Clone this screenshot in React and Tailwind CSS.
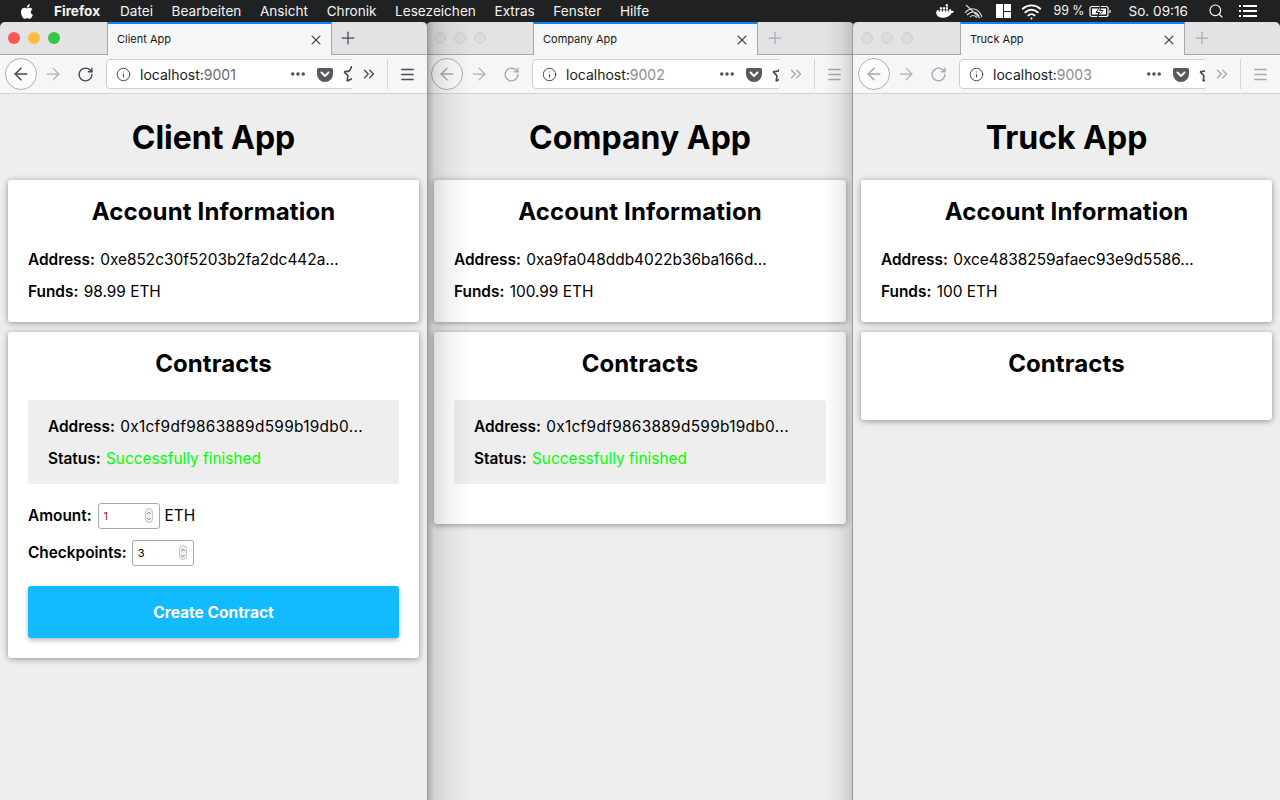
import React from "react";
import { X, Plus, ArrowLeft, ArrowRight, RotateCw, Info, Ellipsis, Star, ChevronsRight, Menu, Search, Wifi, ChevronUp, ChevronDown } from "lucide-react";

const FONT = { sans: "font-['Inter','Liberation_Sans',sans-serif]" };

function Apple() {
    return (
        <svg width="15" height="17" viewBox="0 0 24 28" fill="#fff">
            <path d="M17.6 14.8c0-3 2.500-4.500 2.600-4.600-1.400-2.100-3.600-2.400-4.400-2.400-1.900-.2-3.600 1.100-4.600 1.100-1 0-2.400-1.100-4-1-2 0-3.900 1.200-5 3-2.100 3.700-.5 9.200 1.500 12.200 1 1.500 2.200 3.100 3.800 3 1.500-.1 2.100-1 3.900-1 1.800 0 2.400 1 4 1 1.700 0 2.700-1.500 3.700-3 1.200-1.700 1.700-3.400 1.700-3.500-.1 0-3.200-1.200-3.200-4.800zM14.600 5.800c.8-1 1.400-2.400 1.200-3.800-1.200.1-2.700.8-3.500 1.800-.8.900-1.500 2.300-1.300 3.700 1.400.1 2.700-.7 3.600-1.700z" />
        </svg>
    );
}

function Docker() {
    return (
        <svg width="18" height="14" viewBox="0 0 24 18" fill="#fff">
            <path d="M13 0h3v3h-3zM5 4h3v3H5zM9 4h3v3H9zM13 4h3v3h-3zM1 8h3v3H1zM5 8h3v3H5zM9 8h3v3H9zM13 8h3v3h-3zM17 8h3v3h-3z" />
            <path d="M0 12h20c1.500 0 3-.8 4-2.500-1-.8-2.500-1-3.500-.5-.2-1.500-1-2.500-2-3-.8 1-1 2.500-.5 4H0c0 4 3 8 9 8s10-3 11.500-6z" />
        </svg>
    );
}

function NoSignal() {
    return (
        <svg width="19" height="15" viewBox="0 0 19 15" fill="none" stroke="#ddd" strokeWidth="1.100">
            <path d="M1 9c2-3 6-5 9-4 3 .5 6 3 8 8M3 11c2-2 4-3 6-3 3 0 5 2 6 4M6 13c1-1 2-1.500 3-1.500 2 0 3 1 4 2M2 1l14 13" />
        </svg>
    );
}

function Tiles() {
    return (
        <div className="grid h-[14px] w-[15px] grid-cols-2 gap-px">
            <div className="row-span-2 bg-white" />
            <div className="h-[7px] bg-white" />
            <div className="h-[6px] bg-white" />
        </div>
    );
}

function Battery() {
    return (
        <svg width="23" height="13" viewBox="0 0 23 13" fill="none">
            <rect x="1" y="1.500" width="18" height="10" rx="2" stroke="#fff" strokeWidth="1.200" />
            <rect x="3" y="3.500" width="14" height="6" fill="#fff" />
            <path d="M11.500 1 7 7.500h3L8.500 12 14 5.500h-3z" fill="#222" stroke="#222" strokeWidth="1" />
            <path d="M11.200 2 8 7h3l-1 3.500L13.200 6h-3z" fill="#fff" />
            <path d="M21 5v3" stroke="#fff" strokeWidth="1.200" />
        </svg>
    );
}

function ListMenu() {
    return (
        <svg width="18" height="12" viewBox="0 0 18 12" fill="#fff">
            <path d="M0 0h2v2H0zM4 0h14v2H4zM0 5h2v2H0zM4 5h14v2H4zM0 10h2v2H0zM4 10h14v2H4z" />
        </svg>
    );
}

function Pocket() {
    return (
        <svg width="16" height="15" viewBox="0 0 16 15">
            <path d="M1.500 1h13A1.500 1.500 0 0 1 16 2.500V7a8 8 0 0 1-16 0V2.500A1.500 1.500 0 0 1 1.500 1z" fill="#5a5a5e" />
            <path d="M4.500 5.500 8 9l3.500-3.500" fill="none" stroke="#fff" strokeWidth="2" strokeLinecap="round" strokeLinejoin="round" />
        </svg>
    );
}

function MenuBar() {
    const items = ["Datei", "Bearbeiten", "Ansicht", "Chronik", "Lesezeichen", "Extras", "Fenster", "Hilfe"];
    return (
        <div className="flex h-[22px] items-center bg-[#202122] text-[13.6px] text-[#f4f4f4]">
            <div className="ml-[20px] mr-[19px] flex w-[15px] justify-center"><Apple /></div>
            <span className="mr-[20px] font-bold">Firefox</span>
            <div className="flex gap-[18.6px]">
                {items.map((item) => <span key={item}>{item}</span>)}
            </div>
            <div className="ml-auto flex items-center">
                <div className="mr-[10px]"><Docker /></div>
                <div className="mr-[13px]"><NoSignal /></div>
                <div className="mr-[10px]"><Tiles /></div>
                <Wifi size={21} strokeWidth={2.200} className="mr-[11px] text-white" />
                <span className="mr-[4px] text-[12.4px]">99 %</span>
                <div className="mr-[17px]"><Battery /></div>
                <span className="mr-[20px]">So. 09:16</span>
                <Search size={16} strokeWidth={1.700} className="mr-[15px] text-white" />
                <div className="mr-[23px]"><ListMenu /></div>
            </div>
        </div>
    );
}

function TrafficLights({ active }) {
    if (!active) {
        return (
            <div className="flex w-[107px] gap-[8px] pl-[8px]">
                <div className="h-[12px] w-[12px] rounded-full border border-[#d0d0d0] bg-[#dcdcdc]" />
                <div className="h-[12px] w-[12px] rounded-full border border-[#d0d0d0] bg-[#dcdcdc]" />
                <div className="h-[12px] w-[12px] rounded-full border border-[#d0d0d0] bg-[#dcdcdc]" />
            </div>
        );
    }
    return (
        <div className="flex w-[107px] gap-[8px] pl-[8px]">
            <div className="h-[12px] w-[12px] rounded-full bg-[#fc5753]" />
            <div className="h-[12px] w-[12px] rounded-full bg-[#fdbc40]" />
            <div className="h-[12px] w-[12px] rounded-full bg-[#33c748]" />
        </div>
    );
}

function BrowserChrome({ title, port, active }) {
    const dim = active ? "text-[#4a4a4f]" : "text-[#a9a9ad]";
    return (
        <div className="shrink-0">
            <div className="flex h-[33px] items-center rounded-t-[5px] border-b border-[#a8a8a8] bg-[#e3e3e5]">
                <TrafficLights active={active} />
                <div className="-mb-px flex h-[33px] w-[225px] items-center justify-between border-x border-x-[#a8a8a8] border-t-2 border-t-[#0a84ff] bg-[#f5f6f7] pl-[9px] pr-[7px]">
                    <span className="text-[11px] text-[#18181a]">{title}</span>
                    <X size={16} strokeWidth={1.600} className="text-[#4a4a4f]" />
                </div>
                <Plus size={20} strokeWidth={1.500} className={`${active ? "ml-[6px]" : "ml-[7px]"} ${dim}`} />
            </div>
            <div className="flex h-[39px] items-center border-b border-[#d4d4d5] bg-[#f5f6f7]">
                <div className={`ml-[5px] flex h-[32px] w-[32px] items-center justify-center rounded-full border border-[#b1b1b1] bg-white/50 ${dim}`}>
                    <ArrowLeft size={20} strokeWidth={1.800} />
                </div>
                <ArrowRight size={20} strokeWidth={1.500} className="ml-[6px] text-[#b1b1b3]" />
                <RotateCw size={17} strokeWidth={2} className={`ml-[14px] ${dim}`} />
                <div className="relative ml-[12px] flex h-[30px] flex-1 items-center overflow-hidden">
                    <div className="flex h-[30px] w-[260px] shrink-0 items-center rounded-[4px] border border-[#cfcfd0] bg-white pl-[9px]">
                        <Info size={15} strokeWidth={1.600} className="text-[#4a4a4f]" />
                        <span className="ml-[9px] text-[14px] text-[#18181a]">localhost:<span className={active ? "text-[#6a6a70]" : "text-[#8d8d92]"}>{port}</span></span>
                        <Ellipsis size={18} strokeWidth={2.600} className="ml-[53px] shrink-0 text-[#4a4a4f]" />
                        <div className="ml-[10px] shrink-0"><Pocket /></div>
                        <Star size={18} strokeWidth={2.200} className="ml-[10px] shrink-0 text-[#4a4a4f]" />
                    </div>
                </div>
                <div className="ml-[-1px] flex h-[30px] w-[36px] items-center bg-[#f5f6f7] pl-[9px]">
                    <ChevronsRight size={18} strokeWidth={1.800} className={dim} />
                </div>
                <div className="h-[30px] w-px bg-[#d4d4d5]" />
                <Menu size={17} strokeWidth={1.900} className={`mx-[11px] ${dim}`} />
            </div>
        </div>
    );
}

function NumberField({ value, red }) {
    return (
        <div className="relative flex h-[26px] w-[62px] items-center rounded-[3px] border border-[#a9a9a9] bg-white pl-[5px] text-[11px] leading-none">
            <span className={red ? "text-[#8a2a00]" : "text-black"}>{value}</span>
            <div className="absolute right-[6px] top-[4px] flex h-[15px] w-[8px] flex-col items-center justify-center rounded-[4px] border border-[#c8c8c8] bg-[#f0f0f0] text-[#555]">
                <ChevronUp size={6} strokeWidth={3} />
                <ChevronDown size={6} strokeWidth={3} />
            </div>
        </div>
    );
}

function Card({ children, className }) {
    return (
        <div className={`rounded-[3px] bg-white shadow-[0_1px_6px_rgba(0,0,0,0.4)] ${className}`}>
            {children}
        </div>
    );
}

function Row({ label, children, className = "" }) {
    return (
        <p className={`h-[32px] text-[15.4px] leading-[34px] whitespace-nowrap ${className}`}>
            <b className="mr-px font-semibold">{label}:</b> {children}
        </p>
    );
}

function ContractBox() {
    return (
        <div className="mt-[20px] h-[84px] rounded-[3px] bg-[#eeeeee] px-[20px] py-[10px]">
            <Row label="Address"><span className="tracking-[0.3px]">0x1cf9df9863889d599b19db0...</span></Row>
            <Row label="Status"><span className="text-[#00ff00]">Successfully finished</span></Row>
        </div>
    );
}

function AppWindow({ title, name, port, address, funds, active, showContract, showForm, wrapClass, children }) {
    return (
        <div className={`relative flex h-[778px] flex-col rounded-t-[5px] ${wrapClass}`}>
            <BrowserChrome title={title} port={port} active={active} />
            <div className="flex-1 bg-[#eeeeee] px-[8px] text-black">
                <h1 className="pb-[23px] pt-[24px] text-center text-[32px] font-bold leading-[39px]">{name}</h1>
                <Card className="h-[142px] px-[20px] pt-[15px]">
                    <h2 className="mb-[15px] text-center text-[24px] font-bold leading-[33px] tracking-[0.15px]">Account Information</h2>
                    <Row label="Address">{address}</Row>
                    <Row label="Funds">{funds} ETH</Row>
                </Card>
                <Card className={`mt-[10px] px-[20px] pt-[15px] ${showForm ? "h-[326px]" : showContract ? "h-[192px]" : "h-[88px]"}`}>
                    <h2 className="text-center text-[24px] font-bold leading-[33px] tracking-[0.1px]">Contracts</h2>
                    {showContract && <ContractBox />}
                    {showForm && (
                        <div className="text-[15.4px]">
                            <div className="mt-[17px] flex h-[30px] items-center gap-[5px]">
                                <b className="mr-px font-semibold">Amount:</b>
                                <NumberField value="1" red />
                                <span>ETH</span>
                            </div>
                            <div className="mt-[7px] flex h-[30px] items-center gap-[5px]">
                                <b className="font-semibold">Checkpoints:</b>
                                <NumberField value="3" />
                            </div>
                            <button className="mt-[18px] h-[52px] w-full rounded-[3px] bg-[#12baff] pt-px text-[15.5px] font-bold text-white shadow-[0_2px_5px_rgba(0,0,0,0.3)]">
                                Create Contract
                            </button>
                        </div>
                    )}
                </Card>
            </div>
            {children}
        </div>
    );
}

export default function App() {
    return (
        <div className={`h-[800px] w-[1280px] overflow-hidden bg-[#202122] ${FONT.sans}`}>
            <MenuBar />
            <div className="grid grid-cols-[427px_426px_427px]">
                <AppWindow title="Client App" name="Client App" port="9001" address="0xe852c30f5203b2fa2dc442a..." funds="98.99" active showContract showForm wrapClass="z-20 shadow-[1px_0_0_#9a9a9a]" />
                <AppWindow title="Company App" name="Company App" port="9002" address="0xa9fa048ddb4022b36ba166d..." funds="100.99" showContract wrapClass="z-0 -mx-px">
                    {/* shadows the neighbouring windows cast on this one */}
                    <div className="pointer-events-none absolute inset-y-0 left-0 w-[48px] bg-[linear-gradient(90deg,rgba(0,0,0,0.32),rgba(0,0,0,0.12)_8px,rgba(0,0,0,0.05)_22px,rgba(0,0,0,0)_46px)]" />
                    <div className="pointer-events-none absolute inset-y-0 right-0 w-[30px] bg-[linear-gradient(270deg,rgba(0,0,0,0.16),rgba(0,0,0,0.05)_14px,rgba(0,0,0,0)_30px)]" />
                </AppWindow>
                <AppWindow title="Truck App" name="Truck App" port="9003" address="0xce4838259afaec93e9d5586..." funds="100" wrapClass="z-10 shadow-[-1px_0_0_#9a9a9a]" />
            </div>
        </div>
    );
}
